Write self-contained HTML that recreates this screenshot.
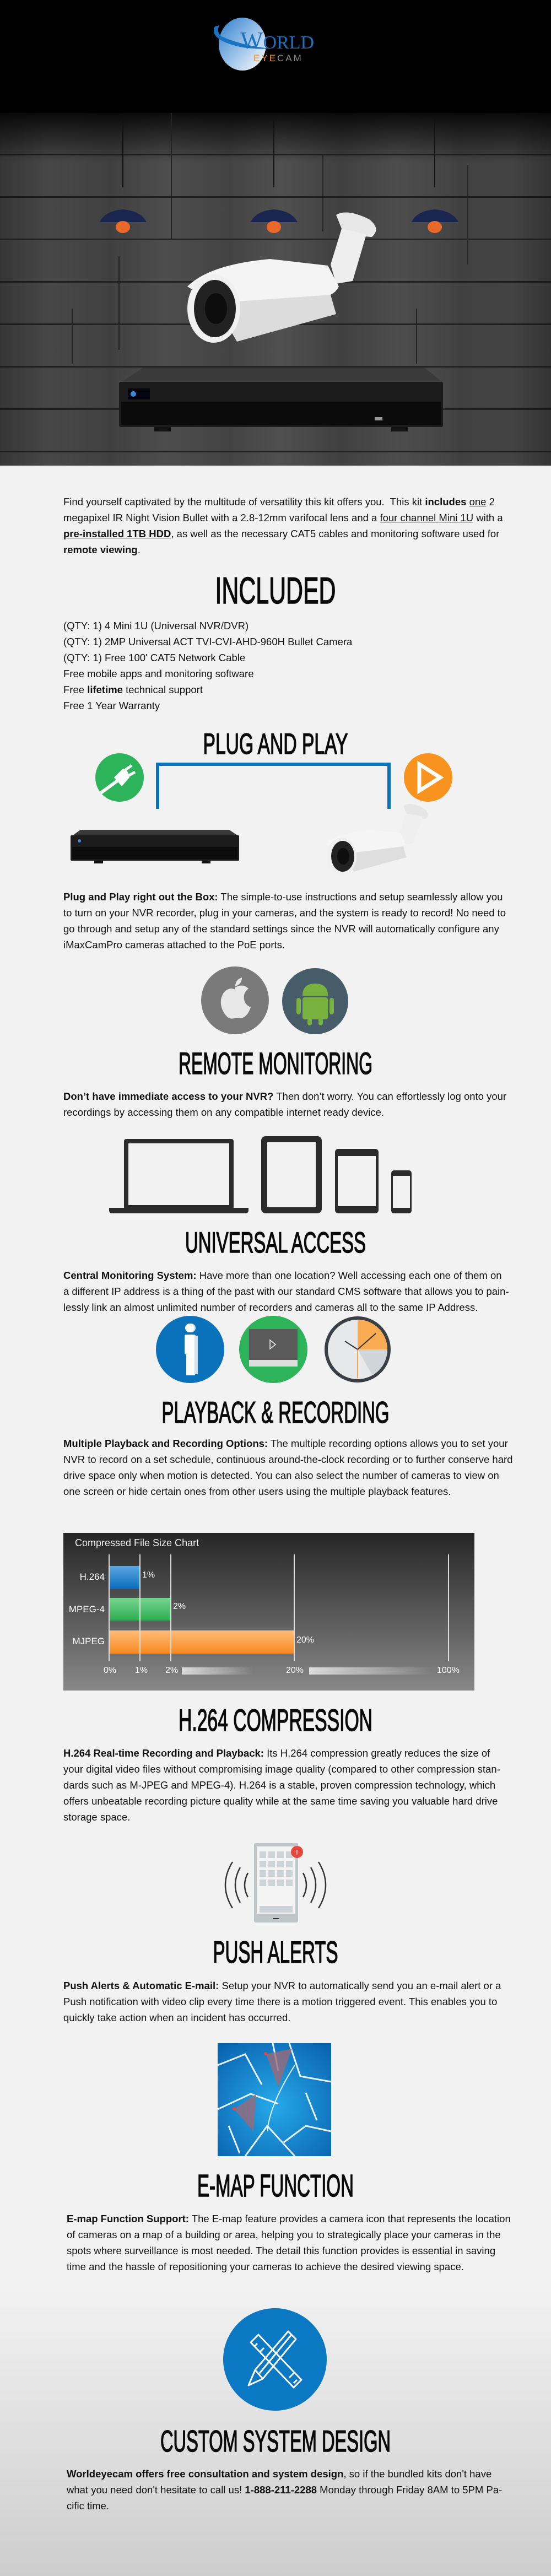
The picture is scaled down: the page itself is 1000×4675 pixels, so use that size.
<!DOCTYPE html>
<html><head><meta charset="utf-8">
<style>
*{margin:0;padding:0;box-sizing:border-box}
html,body{width:1000px;height:4675px;overflow:hidden}
body{position:relative;background:linear-gradient(#f2f2f2 0,#f2f2f2 4150px,#cdcdcd 4675px);font-family:"Liberation Sans Narrow","Liberation Sans",sans-serif;color:#111}
.a{position:absolute}
.hs{position:absolute;left:0}
.hs text{font-family:"Liberation Sans",sans-serif;fill:#0a0a0a;stroke:#0a0a0a;stroke-width:1.6}
.p{position:absolute;left:115px;width:757px;font-size:18.5px;line-height:29px}
.p .l{display:block;white-space:nowrap;text-align:justify;text-align-last:justify;height:29px}
.p .e{text-align-last:left}
u{text-decoration:underline}
.circ{position:absolute;border-radius:50%}
</style></head><body>

<div class="a" style="left:0;top:0;width:1000px;height:845px;background:#000"></div>
<div class="a" style="left:0;top:205px;width:1000px;height:640px;background:
linear-gradient(rgba(0,0,0,.85),rgba(0,0,0,0) 90px),
linear-gradient(90deg,rgba(0,0,0,.2),rgba(0,0,0,0) 20%,rgba(0,0,0,0) 80%,rgba(0,0,0,.25)),
repeating-linear-gradient(180deg,transparent 0,transparent 74px,#222 74px,#222 77px),
repeating-linear-gradient(90deg,#444 0,#505050 90px,#404040 200px,#4d4d4d 300px,#434343 420px);"></div>
<div class="a" style="left:215px;top:465px;width:2px;height:170px;background:#222"></div>
<div class="a" style="left:485px;top:482px;width:2px;height:80px;background:#222"></div>
<div class="a" style="left:755px;top:560px;width:2px;height:100px;background:#222"></div>
<div class="a" style="left:310px;top:205px;width:2px;height:230px;background:#222"></div>
<div class="a" style="left:585px;top:280px;width:2px;height:140px;background:#222"></div>
<div class="a" style="left:848px;top:300px;width:2px;height:180px;background:#222"></div>
<div class="a" style="left:130px;top:560px;width:2px;height:100px;background:#222"></div>
<svg class="a" style="left:0;top:215px" width="1000" height="210">
<g stroke="#111">
<line x1="223" y1="0" x2="223" y2="125" stroke-width="2"/><line x1="497" y1="0" x2="497" y2="125" stroke-width="2"/><line x1="789" y1="0" x2="789" y2="125" stroke-width="2"/>
</g>
<path d="M181 188 Q190 168 223 165 Q256 168 266 188 Z" fill="#1a2550"/>
<path d="M455 188 Q464 168 497 165 Q530 168 540 188 Z" fill="#1a2550"/>
<path d="M747 188 Q756 168 789 165 Q822 168 832 188 Z" fill="#1a2550"/>
<ellipse cx="223" cy="197" rx="13" ry="11" fill="#e8692a"/>
<ellipse cx="497" cy="197" rx="13" ry="11" fill="#e8692a"/>
<ellipse cx="789" cy="197" rx="13" ry="11" fill="#e8692a"/>
</svg>
<svg class="a" style="left:380px;top:28px" width="250" height="105">
<defs><linearGradient id="gl" x1="0" x2="1" y1="0" y2="1"><stop offset="0" stop-color="#2e7fd0"/><stop offset="1" stop-color="#ffffff"/></linearGradient></defs>
<ellipse cx="60" cy="52" rx="43" ry="48" fill="url(#gl)"/>
<path d="M10 20 Q-2 45 60 58 Q90 62 110 60 Q60 55 22 38 Q12 30 18 18 Z" fill="#1a73c0"/>
<text x="56" y="60" font-family="Liberation Serif,serif" font-size="44" fill="#1a73c0">W<tspan font-size="34">ORLD</tspan></text>
<text x="80" y="83" font-family="Liberation Sans,sans-serif" font-size="17" letter-spacing="3" fill="#f08a23">EYE<tspan fill="#8a8a8a">CAM</tspan></text>
</svg>
<svg class="a" style="left:320px;top:370px" width="380" height="270">
<path d="M290 20 Q310 8 350 28 Q372 45 355 60 Q330 60 300 45 Z" fill="#e8e8e8"/>
<path d="M300 45 L345 55 L320 140 L290 145 L280 110 Z" fill="#eeeeee"/>
<path d="M20 150 Q60 110 170 100 L275 112 L295 150 Q290 160 280 165 L120 200 Q60 175 20 150 Z" fill="#f4f4f4"/>
<path d="M70 180 L280 165 L290 200 L110 250 Z" fill="#dcdcdc"/>
<ellipse cx="68" cy="190" rx="48" ry="62" fill="#f0f0f0"/>
<ellipse cx="70" cy="190" rx="38" ry="52" fill="#222"/>
<ellipse cx="72" cy="190" rx="20" ry="28" fill="#0d0d0d"/>
</svg>
<svg class="a" style="left:210px;top:665px" width="600" height="125">
<path d="M12 28 L50 2 L560 2 L592 28 Z" fill="#3a3a3a"/>
<rect x="6" y="28" width="588" height="82" rx="3" fill="#1b1b1b"/>
<rect x="10" y="64" width="580" height="42" fill="#0b0b0b"/>
<rect x="22" y="40" width="40" height="20" fill="#050510"/>
<circle cx="32" cy="50" r="5" fill="#3a8ad8"/>
<rect x="470" y="92" width="14" height="6" fill="#999"/>
<rect x="70" y="110" width="30" height="8" fill="#111"/><rect x="500" y="110" width="30" height="8" fill="#111"/>
</svg>

<div class="p" style="top:896px">
<span class="l">Find yourself captivated by the multitude of versatility this kit offers you.&nbsp; This kit <b>includes</b> <u>one</u> 2</span>
<span class="l">megapixel IR Night Vision Bullet with a 2.8-12mm varifocal lens and a <u>four channel Mini 1U</u> with a</span>
<span class="l"><b><u>pre-installed 1TB HDD</u></b>, as well as the necessary CAT5 cables and monitoring software used for</span>
<span class="l e"><b>remote viewing</b>.</span>
</div>

<svg class="hs" style="top:1041px" width="1000" height="60"><text x="500" y="54" text-anchor="middle" font-size="68" textLength="219" lengthAdjust="spacingAndGlyphs">INCLUDED</text></svg>
<div class="p" style="top:1121px">
<span class="l e">(QTY: 1) 4 Mini 1U (Universal NVR/DVR)</span>
<span class="l e">(QTY: 1) 2MP Universal ACT TVI-CVI-AHD-960H Bullet Camera</span>
<span class="l e">(QTY: 1) Free 100' CAT5 Network Cable</span>
<span class="l e">Free mobile apps and monitoring software</span>
<span class="l e">Free <b>lifetime</b> technical support</span>
<span class="l e">Free 1 Year Warranty</span>
</div>

<svg class="hs" style="top:1325px" width="1000" height="50"><text x="500" y="43" text-anchor="middle" font-size="53" textLength="263" lengthAdjust="spacingAndGlyphs">PLUG AND PLAY</text></svg>
<div class="a" style="left:283px;top:1384px;width:426px;height:84px;border:6px solid #0a72bb;border-bottom:0"></div>
<div class="circ" style="left:173px;top:1367px;width:88px;height:88px;background:#2db35a"></div>
<svg class="a" style="left:173px;top:1367px" width="88" height="88"><path d="M10 72 L40 50" stroke="#fff" stroke-width="6"/><path d="M34 44 L50 28 Q60 30 62 44 L48 60 Z" fill="#fff"/><path d="M52 32 L66 22 M58 42 L72 34" stroke="#fff" stroke-width="5"/></svg>
<div class="circ" style="left:733px;top:1367px;width:88px;height:88px;background:#f7931e"></div>
<svg class="a" style="left:733px;top:1367px" width="88" height="88"><path d="M28 20 L66 44 L28 68 Z" fill="none" stroke="#fff" stroke-width="7"/></svg>
<svg class="a" style="left:126px;top:1504px" width="312" height="66">
<path d="M6 12 L20 2 L290 2 L305 12 Z" fill="#3a3a3a"/>
<rect x="2" y="12" width="306" height="46" rx="2" fill="#1c1c1c"/>
<rect x="5" y="33" width="300" height="22" fill="#0c0c0c"/>
<circle cx="18" cy="22" r="3" fill="#3a8ad8"/>
<rect x="45" y="58" width="16" height="5" fill="#111"/><rect x="240" y="58" width="16" height="5" fill="#111"/>
</svg>
<svg class="a" style="left:582px;top:1450px" width="202" height="140">
<path d="M150 12 Q165 4 188 18 Q200 28 190 36 Q172 36 155 26 Z" fill="#e6e6e6"/>
<path d="M155 26 L185 32 L168 80 L148 84 L142 62 Z" fill="#efefef"/>
<path d="M8 82 Q30 62 90 56 L145 62 L155 84 L60 108 Q30 98 8 82 Z" fill="#f5f5f5"/>
<path d="M40 100 L150 86 L155 106 L60 132 Z" fill="#dedede"/>
<ellipse cx="38" cy="104" rx="27" ry="34" fill="#f0f0f0"/>
<ellipse cx="40" cy="104" rx="21" ry="28" fill="#222"/>
<ellipse cx="41" cy="104" rx="11" ry="15" fill="#0e0e0e"/>
</svg>

<div class="p" style="top:1613px">
<span class="l"><b>Plug and Play right out the Box:</b> The simple-to-use instructions and setup seamlessly allow you</span>
<span class="l">to turn on your NVR recorder, plug in your cameras, and the system is ready to record! No need to</span>
<span class="l">go through and setup any of the standard settings since the NVR will automatically configure any</span>
<span class="l e">iMaxCamPro cameras attached to the PoE ports.</span>
</div>

<div class="circ" style="left:365px;top:1754px;width:123px;height:123px;background:#7a7a7a"></div>
<svg class="a" style="left:365px;top:1754px" width="123" height="123"><path d="M62 38 Q75 30 86 40 Q76 48 78 60 Q80 70 90 74 Q84 92 72 94 Q66 92 60 94 Q54 96 48 92 Q34 78 36 60 Q40 42 54 40 Q58 40 62 42 Z" fill="#e8e8e8"/><path d="M62 36 Q62 24 74 20 Q74 32 62 36 Z" fill="#e8e8e8"/></svg>
<div class="circ" style="left:512px;top:1757px;width:120px;height:120px;background:#465c68"></div>
<svg class="a" style="left:512px;top:1757px" width="120" height="120"><path d="M37 50 Q37 28 60 28 Q83 28 83 50 Z" fill="#78b13e"/><rect x="37" y="53" width="46" height="40" rx="4" fill="#78b13e"/><rect x="26" y="54" width="8" height="30" rx="4" fill="#78b13e"/><rect x="86" y="54" width="8" height="30" rx="4" fill="#78b13e"/><rect x="46" y="88" width="8" height="16" rx="4" fill="#78b13e"/><rect x="66" y="88" width="8" height="16" rx="4" fill="#78b13e"/></svg>

<svg class="hs" style="top:1904px" width="1000" height="50"><text x="500" y="45" text-anchor="middle" font-size="56" textLength="352" lengthAdjust="spacingAndGlyphs">REMOTE MONITORING</text></svg>
<div class="p" style="top:1975px">
<span class="l"><b>Don’t have immediate access to your NVR?</b> Then don’t worry. You can effortlessly log onto your</span>
<span class="l e">recordings by accessing them on any compatible internet ready device.</span>
</div>

<div class="a" style="left:225px;top:2067px;width:199px;height:128px;border:8px solid #2b2b2b;border-radius:4px"></div>
<div class="a" style="left:198px;top:2192px;width:253px;height:10px;background:#2b2b2b;border-radius:0 0 5px 5px"></div>
<div class="a" style="left:474px;top:2062px;width:110px;height:140px;border:11px solid #2b2b2b;border-radius:8px"></div>
<div class="a" style="left:608px;top:2085px;width:79px;height:117px;border:5px solid #2b2b2b;border-top-width:13px;border-bottom-width:13px;border-radius:6px"></div>
<div class="a" style="left:710px;top:2124px;width:37px;height:78px;border:3px solid #2b2b2b;border-top-width:10px;border-bottom-width:10px;border-radius:5px"></div>

<svg class="hs" style="top:2230px" width="1000" height="50"><text x="500" y="43" text-anchor="middle" font-size="53" textLength="328" lengthAdjust="spacingAndGlyphs">UNIVERSAL ACCESS</text></svg>
<div class="p" style="top:2300px">
<span class="l"><b>Central Monitoring System:</b> Have more than one location? Well accessing each one of them on</span>
<span class="l">a different IP address is a thing of the past with our standard CMS software that allows you to pain-</span>
<span class="l e">lessly link an almost unlimited number of recorders and cameras all to the same IP Address.</span>
</div>

<div class="circ" style="left:283px;top:2388px;width:124px;height:122px;background:#0a72bb"></div>
<svg class="a" style="left:283px;top:2388px" width="124" height="122"><circle cx="64" cy="22" r="8" fill="#cfe3f3"/><circle cx="61" cy="22" r="8" fill="#fff"/><rect x="52" y="34" width="20" height="36" rx="3" fill="#fff"/><rect x="55" y="66" width="16" height="42" fill="#fff"/><rect x="70" y="36" width="6" height="70" fill="#cfe3f3"/></svg>
<div class="circ" style="left:434px;top:2388px;width:124px;height:122px;background:#2db35a"></div>
<svg class="a" style="left:434px;top:2388px" width="124" height="122"><rect x="18" y="24" width="88" height="56" fill="#5a5a5a"/><rect x="18" y="80" width="88" height="12" fill="#ddd"/><path d="M56 44 L66 52 L56 60 Z" fill="none" stroke="#eee" stroke-width="1.5"/></svg>
<svg class="a" style="left:586px;top:2386px" width="126" height="126">
<circle cx="63" cy="63" r="60" fill="#3a3f46"/><circle cx="63" cy="63" r="54" fill="#e6e8ea"/>
<path d="M63 63 L63 9 A54 54 0 0 1 117 63 Z" fill="#fbab52"/>
<path d="M63 63 L117 63 A54 54 0 0 1 90 110 Z" fill="#cfd5d8"/>
<line x1="63" y1="63" x2="96" y2="34" stroke="#333" stroke-width="2"/><line x1="63" y1="63" x2="40" y2="48" stroke="#333" stroke-width="2"/><line x1="63" y1="63" x2="63" y2="115" stroke="#f7931e" stroke-width="1.5"/>
</svg>

<svg class="hs" style="top:2538px" width="1000" height="50"><text x="500" y="44" text-anchor="middle" font-size="55" textLength="413" lengthAdjust="spacingAndGlyphs">PLAYBACK &amp; RECORDING</text></svg>
<div class="p" style="top:2605px">
<span class="l"><b>Multiple Playback and Recording Options:</b> The multiple recording options allows you to set your</span>
<span class="l">NVR to record on a set schedule, continuous around-the-clock recording or to further conserve hard</span>
<span class="l">drive space only when motion is detected. You can also select the number of cameras to view on</span>
<span class="l e">one screen or hide certain ones from other users using the multiple playback features.</span>
</div>

<div class="a" style="left:115px;top:2782px;width:746px;height:286px;background:linear-gradient(#262626,#888)"></div>
<div class="a" style="left:136px;top:2790px;color:#eee;font-size:18px">Compressed File Size Chart</div>
<div class="a" style="left:198px;top:2842px;width:56px;height:42px;background:linear-gradient(#5aa6e0,#0a6cbc)"></div>
<div class="a" style="left:198px;top:2900px;width:112px;height:41px;background:linear-gradient(#77d48f,#2cae51)"></div>
<div class="a" style="left:198px;top:2959px;width:336px;height:42px;background:linear-gradient(#ffbc78,#f7891f)"></div>
<div class="a" style="left:197px;top:2821px;width:2px;height:194px;background:#ddd"></div>
<div class="a" style="left:253px;top:2821px;width:2px;height:194px;background:#ddd"></div>
<div class="a" style="left:309px;top:2821px;width:2px;height:194px;background:#ddd"></div>
<div class="a" style="left:533px;top:2821px;width:2px;height:194px;background:#ddd"></div>
<div class="a" style="left:813px;top:2821px;width:2px;height:194px;background:#ddd"></div>
<div class="a" style="left:120px;top:2852px;width:70px;text-align:right;color:#fff;font-size:17px">H.264</div>
<div class="a" style="left:120px;top:2911px;width:70px;text-align:right;color:#fff;font-size:17px">MPEG-4</div>
<div class="a" style="left:120px;top:2969px;width:70px;text-align:right;color:#fff;font-size:17px">MJPEG</div>
<div class="a" style="left:258px;top:2850px;color:#fff;font-size:16px">1%</div>
<div class="a" style="left:314px;top:2907px;color:#fff;font-size:16px">2%</div>
<div class="a" style="left:538px;top:2968px;color:#fff;font-size:16px">20%</div>
<div class="a" style="left:188px;top:3023px;color:#fff;font-size:16px">0%</div>
<div class="a" style="left:245px;top:3023px;color:#fff;font-size:16px">1%</div>
<div class="a" style="left:300px;top:3023px;color:#fff;font-size:16px">2%</div>
<div class="a" style="left:519px;top:3023px;color:#fff;font-size:16px">20%</div>
<div class="a" style="left:793px;top:3023px;color:#fff;font-size:16px">100%</div>
<div class="a" style="left:330px;top:3026px;width:130px;height:13px;background:linear-gradient(90deg,#ddd,rgba(200,200,200,0))"></div>
<div class="a" style="left:561px;top:3026px;width:224px;height:13px;background:linear-gradient(90deg,#ddd,rgba(200,200,200,0))"></div>

<svg class="hs" style="top:3096px" width="1000" height="50"><text x="500" y="45" text-anchor="middle" font-size="56" textLength="352" lengthAdjust="spacingAndGlyphs">H.264 COMPRESSION</text></svg>
<div class="p" style="top:3167px">
<span class="l"><b>H.264 Real-time Recording and Playback:</b> Its H.264 compression greatly reduces the size of</span>
<span class="l">your digital video files without compromising image quality (compared to other compression stan-</span>
<span class="l">dards such as M-JPEG and MPEG-4). H.264 is a stable, proven compression technology, which</span>
<span class="l">offers unbeatable recording picture quality while at the same time saving you valuable hard drive</span>
<span class="l e">storage space.</span>
</div>

<svg class="a" style="left:400px;top:3343px" width="200" height="150">
<rect x="61" y="2" width="80" height="144" rx="3" fill="#bfc6c9"/>
<rect x="66" y="8" width="70" height="122" fill="#f4f4f4"/>
<g fill="#cdd4d7">
<rect x="71" y="17" width="12" height="12"/><rect x="87" y="17" width="12" height="12"/><rect x="103" y="17" width="12" height="12"/><rect x="119" y="17" width="12" height="12"/>
<rect x="71" y="34" width="12" height="12"/><rect x="87" y="34" width="12" height="12"/><rect x="103" y="34" width="12" height="12"/><rect x="119" y="34" width="12" height="12"/>
<rect x="71" y="51" width="12" height="12"/><rect x="87" y="51" width="12" height="12"/><rect x="103" y="51" width="12" height="12"/><rect x="119" y="51" width="12" height="12"/>
<rect x="71" y="68" width="12" height="12"/><rect x="87" y="68" width="12" height="12"/><rect x="103" y="68" width="12" height="12"/><rect x="119" y="68" width="12" height="12"/>
<rect x="71" y="116" width="60" height="12"/></g>
<rect x="95" y="138" width="12" height="2" fill="#333"/>
<circle cx="139" cy="18" r="11" fill="#e8473b"/><text x="139" y="24" text-anchor="middle" font-size="15" fill="#fff" font-family="Liberation Sans">!</text>
<g fill="none" stroke="#333" stroke-width="2.5">
<path d="M22 36 Q-4 78 22 120"/><path d="M36 46 Q18 78 36 110"/><path d="M50 56 Q38 78 50 100"/>
<path d="M178 36 Q204 78 178 120"/><path d="M164 46 Q182 78 164 110"/><path d="M150 56 Q162 78 150 100"/>
</g></svg>

<svg class="hs" style="top:3517px" width="1000" height="50"><text x="500" y="45" text-anchor="middle" font-size="56" textLength="227" lengthAdjust="spacingAndGlyphs">PUSH ALERTS</text></svg>
<div class="p" style="top:3589px">
<span class="l"><b>Push Alerts &amp; Automatic E-mail:</b> Setup your NVR to automatically send you an e-mail alert or a</span>
<span class="l">Push notification with video clip every time there is a motion triggered event. This enables you to</span>
<span class="l e">quickly take action when an incident has occurred.</span>
</div>

<svg class="a" style="left:395px;top:3708px" width="206" height="205">
<defs><radialGradient id="bl" cx=".5" cy=".55" r=".7"><stop offset="0" stop-color="#26a9ea"/><stop offset="1" stop-color="#0a64b0"/></radialGradient></defs>
<rect width="206" height="205" fill="url(#bl)"/>
<g stroke="#e6f3ff" stroke-width="3" fill="none">
<path d="M0 40 L50 20 L80 75 M100 0 L110 50 M130 0 L150 60 L206 70 M0 120 L60 92 L110 110 M120 180 L160 150 L206 160 M50 205 L90 150 L140 205 M160 90 L180 140 M20 150 L40 200"/>
<path d="M90 160 Q95 110 140 40" stroke-width="2"/>
</g>
<path d="M88 20 L135 10 L110 80 Z" fill="#9a6a78" opacity=".8"/>
<path d="M30 120 L70 92 L65 160 Z" fill="#9a6a78" opacity=".8"/>
<circle cx="87" cy="19" r="3" fill="#e8473b"/><circle cx="30" cy="119" r="3" fill="#e8473b"/>
</svg>

<svg class="hs" style="top:3940px" width="1000" height="52"><text x="500" y="46" text-anchor="middle" font-size="57" textLength="284" lengthAdjust="spacingAndGlyphs">E-MAP FUNCTION</text></svg>
<div class="p" style="top:4012px;left:121px;width:751px">
<span class="l"><b>E-map Function Support:</b> The E-map feature provides a camera icon that represents the location</span>
<span class="l">of cameras on a map of a building or area, helping you to strategically place your cameras in the</span>
<span class="l">spots where surveillance is most needed. The detail this function provides is essential in saving</span>
<span class="l e">time and the hassle of repositioning your cameras to achieve the desired viewing space.</span>
</div>

<div class="circ" style="left:405px;top:4189px;width:188px;height:186px;background:#0a78c2"></div>
<svg class="a" style="left:405px;top:4189px" width="188" height="186" fill="none" stroke="#fff" stroke-width="3" stroke-linejoin="round">
<path d="M50 62 L64 48 L142 130 L128 144 Z"/>
<path d="M56 70 L62 64 M66 80 L74 72 M120 126 L128 118 M128 136 L134 130"/>
<path d="M132 56 L118 42 L58 112 L46 140 L72 128 Z"/>
<path d="M124 48 L66 118 M58 112 L72 128"/>
</svg>

<svg class="hs" style="top:4405px" width="1000" height="50"><text x="500" y="44" text-anchor="middle" font-size="55" textLength="418" lengthAdjust="spacingAndGlyphs">CUSTOM SYSTEM DESIGN</text></svg>
<div class="p" style="top:4475px;left:121px;width:751px">
<span class="l"><b>Worldeyecam offers free consultation and system design</b>, so if the bundled kits don't have</span>
<span class="l">what you need don't hesitate to call us! <b>1-888-211-2288</b> Monday through Friday 8AM to 5PM Pa-</span>
<span class="l e">cific time.</span>
</div>

</body></html>
